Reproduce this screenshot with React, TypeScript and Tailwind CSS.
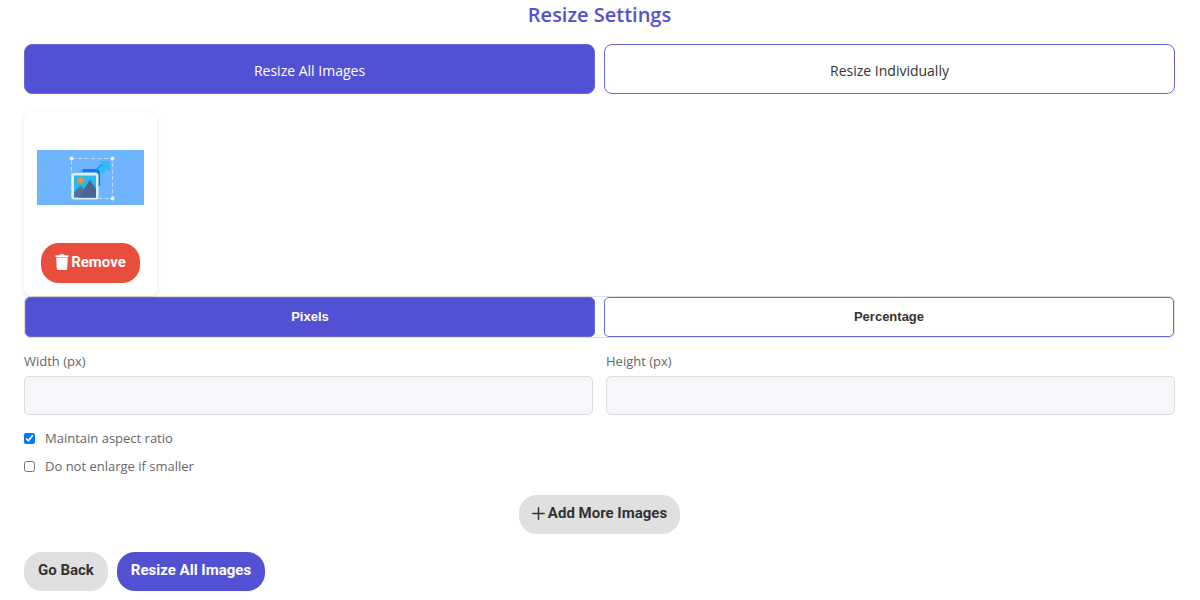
import { useState } from "react";

const sans = "font-['Open_Sans','Noto_Sans',sans-serif]";
const grotesk = "font-['Liberation_Sans',Arial,sans-serif]";
const pill = "font-[Roboto,'Liberation_Sans',sans-serif]";

function Thumbnail() {
  return (
    <svg viewBox="0 0 107 55" className="block w-full" role="img" aria-label="Image preview">
      <rect width="107" height="55" fill="#6fb4ff" />
      <rect x="34.5" y="8.5" width="41" height="40" fill="none" stroke="#b9d9fb" strokeWidth="1" strokeDasharray="4 2.5" />
      <path d="M45.500 20.500H61.500V36" fill="none" stroke="#0a7cf8" strokeWidth="3.200" />
      <path d="M60.500 19L66 14L62.500 11H73V21.500L70 19.500L65 24Z" fill="#2bbdf0" />
      <path d="M59 20L65 14" stroke="#1d8ff5" strokeWidth="1.500" />
      <rect x="34.500" y="23" width="27" height="26.500" rx="2.500" fill="#e3eef8" />
      <rect x="37" y="25.500" width="22" height="22" fill="#2bb8ec" />
      <path d="M37 47.500V42L43.500 35.500L47 39L53 30L59 39V47.500Z" fill="#5273a5" />
      <path d="M41.500 47.500L53 30L59 39V47.500Z" fill="#4b6594" />
      <circle cx="43.500" cy="30.500" r="3" fill="#f0932b" />
      <circle cx="34.500" cy="8.500" r="2" fill="#e8f2fd" />
      <circle cx="75.500" cy="8.500" r="2" fill="#e8f2fd" />
      <circle cx="75.500" cy="48.500" r="2" fill="#e8f2fd" />
    </svg>
  );
}

function TrashIcon() {
  return (
    <svg viewBox="0 0 14 16" className="h-4 w-3.5" fill="currentColor" aria-hidden="true">
      <path d="M0.500 1.200H4.300L5 0.300H9L9.700 1.200H13.500V3H0.500Z" />
      <path d="M1.200 3.600H12.800L12.200 14.500Q12.100 16 10.700 16H3.300Q1.900 16 1.800 14.500Z" />
    </svg>
  );
}

function PlusIcon() {
  return (
    <svg viewBox="0 0 13 13" className="size-[13px]" stroke="currentColor" strokeWidth="1.500" strokeLinecap="round" aria-hidden="true">
      <path d="M6.500 0.800V12.200M0.800 6.500H12.200" />
    </svg>
  );
}

export default function App() {
  const [mode, setMode] = useState("all");
  const [unit, setUnit] = useState("pixels");
  const tab = (on: boolean) => (on ? "bg-[#5251d3] text-white" : "bg-white text-[#333]");

  return (
    <main className={`bg-white pr-[25px] pb-2 pl-6 text-[#666] ${sans}`}>
      <h1 className="text-center text-xl leading-[30px] font-semibold text-[#5251d3]">Resize Settings</h1>

      <div className="mt-3.5 grid grid-cols-2 gap-[9px]">
        <button type="button" aria-pressed={mode === "all"} onClick={() => setMode("all")}
          className={`h-[50px] rounded-lg border border-[#6968da] pt-1 text-sm ${tab(mode === "all")}`}>
          Resize All Images
        </button>
        <button type="button" aria-pressed={mode === "each"} onClick={() => setMode("each")}
          className={`h-[50px] rounded-lg border border-[#6968da] pt-1 text-sm ${tab(mode === "each")}`}>
          Resize Individually
        </button>
      </div>

      <div className="relative mt-[18px] flex w-[133px] flex-col items-center rounded-lg px-[13px] pt-[38px] pb-[13px] shadow-[0_2px_5px_rgba(0,0,0,0.1)]">
        <Thumbnail />
        <button type="button" className={`mt-[38px] flex h-10 items-center gap-0.5 rounded-[18px] bg-[#e94d3d] px-3.5 pb-0.5 text-[15px] font-bold text-white ${pill}`}>
          <TrashIcon />
          Remove
        </button>
      </div>

      <div className={`grid grid-cols-2 gap-[9px] rounded-md border border-[#ddd] text-[13px] font-bold ${grotesk}`}>
        <button type="button" aria-pressed={unit === "pixels"} onClick={() => setUnit("pixels")}
          className={`h-10 rounded-[5px] border border-[#6968da] ${tab(unit === "pixels")}`}>
          Pixels
        </button>
        <button type="button" aria-pressed={unit === "percentage"} onClick={() => setUnit("percentage")}
          className={`h-10 rounded-[5px] border border-[#6968da] ${tab(unit === "percentage")}`}>
          Percentage
        </button>
      </div>

      <div className="mt-[13px] grid grid-cols-2 gap-[13px] text-[13px] leading-5">
        <div>
          <label htmlFor="width">Width (px)</label>
          <input id="width" type="text" inputMode="numeric" className="mt-[5px] block h-[39px] w-full rounded-[5px] border border-[#ddd] bg-[#f6f7fa] px-3" />
        </div>
        <div>
          <label htmlFor="height">Height (px)</label>
          <input id="height" type="text" inputMode="numeric" className="mt-[5px] block h-[39px] w-full rounded-[5px] border border-[#ddd] bg-[#f6f7fa] px-3" />
        </div>
      </div>

      <div className="mt-[13px] flex flex-col items-start gap-2 text-[13px] leading-5">
        <label className="flex items-center gap-2.5">
          <input type="checkbox" defaultChecked className="size-[11px]" />
          Maintain aspect ratio
        </label>
        <label className="flex items-center gap-2.5">
          <input type="checkbox" className="size-[11px]" />
          Do not enlarge if smaller
        </label>
      </div>

      <div className={`mt-[19px] flex justify-center text-[15px] font-bold ${pill}`}>
        <button type="button" className="flex h-[39px] items-center gap-[3px] rounded-[18px] bg-[#e0e0e0] px-[13px] pb-0.5 text-[#333]">
          <PlusIcon />
          Add More Images
        </button>
      </div>

      <div className={`mt-[18px] flex gap-[9px] text-[15px] font-bold ${pill}`}>
        <button type="button" className="h-[39px] rounded-[18px] bg-[#e0e0e0] px-3.5 pb-0.5 text-[#333]">Go Back</button>
        <button type="button" className="h-[39px] rounded-[18px] bg-[#5251d3] px-3.5 pb-0.5 text-white">Resize All Images</button>
      </div>
    </main>
  );
}
